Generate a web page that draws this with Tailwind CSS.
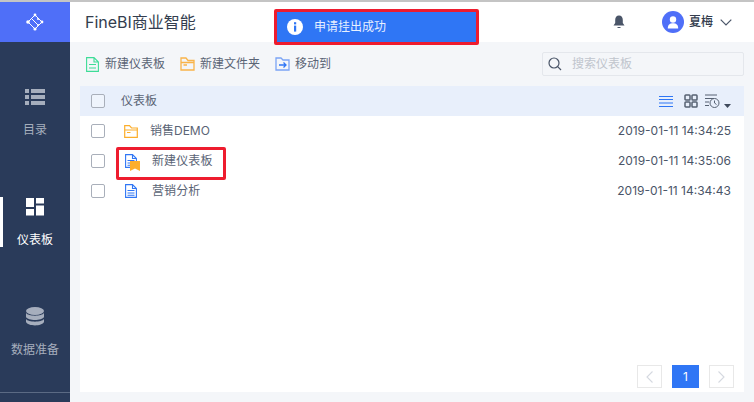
<!DOCTYPE html>
<html lang="zh-CN">
<head>
  <meta charset="UTF-8">
  <title>FineBI</title>
  <script src="https://cdn.jsdelivr.net/npm/@tailwindcss/browser@4"></script>
</head>
<body class="w-[754px] h-[402px] overflow-hidden bg-[#f4f6f9] font-['Inter','Noto_Sans_CJK_SC',sans-serif] text-[#4a5568]">
  <div class="relative flex flex-col w-[754px] h-[402px]">
    <div class="h-[2px] bg-[#c4c4c4]"></div>
    <div class="flex flex-1 min-h-0">

      <!-- Sidebar -->
      <aside class="w-[70px] bg-[#2a3b5a] flex flex-col relative">
        <div class="h-[40px] bg-[#4f6ff8] flex items-center justify-center">
          <svg width="18" height="18" viewBox="0 0 18 18" fill="none" stroke="#fff" stroke-width="1">
            <path d="M9 2 L16 9 L9 16 L2 9 Z M6 6 L12 12" />
            <circle cx="9" cy="2" r="1.4" fill="#fff" stroke="none"/>
            <circle cx="2" cy="9" r="1.8" fill="#fff" stroke="none"/>
            <circle cx="16" cy="9" r="1.4" fill="#fff" stroke="none"/>
            <circle cx="9" cy="16" r="1.6" fill="#fff" stroke="none"/>
            <circle cx="12" cy="6" r="1" fill="#fff" stroke="none"/>
            <circle cx="12" cy="12" r="1" fill="#fff" stroke="none"/>
          </svg>
        </div>
        <div class="flex flex-col gap-[60px] mt-[45px]">
          <a class="h-[50px] flex flex-col items-center text-[#a6aebd]">
            <svg class="mt-[2px] shrink-0" width="20" height="16" viewBox="0 0 20 16" fill="#a6aebd">
              <rect x="0" y="0" width="4" height="4"/><rect x="6" y="0" width="14" height="4"/>
              <rect x="0" y="6" width="4" height="4"/><rect x="6" y="6" width="14" height="4"/>
              <rect x="0" y="12" width="4" height="4"/><rect x="6" y="12" width="14" height="4"/>
            </svg>
            <span class="mt-[16px] text-[12px] leading-[18px] shrink-0">目录</span>
          </a>
          <a class="relative h-[50px] flex flex-col items-center text-white">
            <span class="absolute left-0 top-0 w-[3px] h-[50px] bg-white"></span>
            <svg class="mt-[1px] shrink-0" width="18" height="18" viewBox="0 0 18 18" fill="#fff">
              <rect x="0" y="0" width="8" height="9"/><rect x="10" y="0" width="8" height="5.5"/>
              <rect x="0" y="11" width="8" height="6.5"/><rect x="10" y="7.5" width="8" height="10"/>
            </svg>
            <span class="mt-[15px] text-[12px] leading-[18px] shrink-0">仪表板</span>
          </a>
          <a class="h-[50px] flex flex-col items-center text-[#a6aebd]">
            <svg class="shrink-0" width="18" height="20" viewBox="0 0 18 20" fill="#a6aebd">
              <ellipse cx="9" cy="4" rx="9" ry="4"/>
              <path d="M0 6 C2 9.5 16 9.5 18 6 V10 C16 14 2 14 0 10 Z"/>
              <path d="M0 12 C2 15.5 16 15.5 18 12 V15 C16 19.5 2 19.5 0 15 Z"/>
            </svg>
            <span class="mt-[14px] text-[12px] leading-[18px] shrink-0">数据准备</span>
          </a>
        </div>
        <div class="absolute left-0 right-0 bottom-[9px] h-px bg-[#5b6a84]"></div>
      </aside>

      <div class="flex-1 flex flex-col min-w-0">
        <!-- Header -->
        <header class="h-[40px] bg-white flex items-center pl-[15px] pr-[22px]">
          <h1 class="text-[16px] font-normal text-[#333d4e]">FineBI商业智能</h1>
          <svg class="ml-auto" width="12" height="14" viewBox="0 0 12 14" fill="#4a5568">
            <path d="M6 0.5 C8.5 0.5 9.8 2.5 9.8 5 V8 L11.5 10.5 H0.5 L2.2 8 V5 C2.2 2.5 3.5 0.5 6 0.5 Z"/>
            <rect x="4.5" y="12" width="3" height="1"/>
          </svg>
          <div class="ml-[37px] w-[22px] h-[22px] rounded-full bg-[#4f6ff8] flex items-center justify-center">
            <svg width="12" height="13" viewBox="0 0 12 13" fill="#fff">
              <circle cx="6" cy="3.5" r="3.2"/>
              <path d="M0.8 12.5 C0.8 8.5 3 7.2 6 7.2 C9 7.2 11.2 8.5 11.2 12.5 Z"/>
            </svg>
          </div>
          <span class="ml-[5px] text-[12px] font-medium text-[#333d4e]">夏梅</span>
          <svg class="ml-[7px]" width="12" height="7" viewBox="0 0 12 7" fill="none" stroke="#4a5568" stroke-width="1.2"><path d="M0.7 0.7 L6 6 L11.3 0.7"/></svg>
        </header>

        <!-- Toolbar -->
        <div class="h-[44px] flex items-center pl-[16px] pr-[10px] text-[12px] text-[#5a6475]">
          <svg width="13" height="15" viewBox="0 0 13 15" fill="none" stroke="#3ddc97" stroke-width="1.1">
            <path d="M0.6 0.6 H8 L12.4 5 V14.4 H0.6 Z M8 0.6 V5 H12.4 M3 7.5 H10 M3 11 H10"/>
          </svg>
          <span class="ml-[6px]">新建仪表板</span>
          <svg class="ml-[15px]" width="15" height="14" viewBox="0 0 15 14" fill="none" stroke="#f9b44a" stroke-width="1.3">
            <path d="M1 1 H6 L8 3.5 H14 V13 H1 Z M1 5.5 H14 M3.5 8 H7"/>
          </svg>
          <span class="ml-[5px]">新建文件夹</span>
          <svg class="ml-[15px]" width="15" height="14" viewBox="0 0 15 14" fill="none" stroke="#7ba4f5" stroke-width="1.3">
            <path d="M1 1 H6 L8 3 H14 V13 H1 Z"/>
            <path d="M4 8 H11 M8.5 5.5 L11 8 L8.5 10.5" stroke="#2f76f5"/>
          </svg>
          <span class="ml-[5px]">移动到</span>
          <div class="ml-auto w-[202px] h-[24px] border border-[#e4e7ec] rounded-[2px] flex items-center pl-[5px]">
            <svg width="14" height="14" viewBox="0 0 14 14" fill="none" stroke="#4a5568" stroke-width="1.2">
              <circle cx="6" cy="6" r="5"/><path d="M9.7 9.7 L13 13"/>
            </svg>
            <span class="ml-[10px] text-[12px] text-[#c0c5cd]">搜索仪表板</span>
          </div>
        </div>

        <!-- Panel -->
        <main class="relative ml-[10px] mr-[10px] h-[306px] bg-white flex flex-col">
          <div class="h-[30px] bg-[#e8effb] flex items-center pl-[11px] pr-[13px] text-[12px] text-[#5a6475]">
            <span class="w-[14px] h-[14px] border border-[#a9afba] rounded-[2px] bg-white/30"></span>
            <span class="ml-[16px]">仪表板</span>
            <svg class="ml-auto" width="14" height="13" viewBox="0 0 14 13" stroke="#2f76f5" stroke-width="1"><path d="M0 1.5 H14 M0 4.5 H14 M0 8 H14 M0 11.5 H14"/></svg>
            <svg class="ml-[11px]" width="14" height="14" viewBox="0 0 14 14" fill="none" stroke="#566172" stroke-width="1.5">
              <rect x="1" y="1" width="5" height="5" rx="0.8"/><rect x="8" y="1" width="5" height="5" rx="0.8"/>
              <rect x="1" y="8" width="5" height="5" rx="0.8"/><rect x="8" y="8" width="5" height="5" rx="0.8"/>
            </svg>
            <svg class="ml-[7px]" width="16" height="15" viewBox="0 0 16 15" fill="none" stroke="#566172" stroke-width="1">
              <path d="M0 1 H12 M0 4.5 H9 M0 8 H4 M0 11.5 H4"/>
              <circle cx="9.5" cy="9" r="4.5"/><path d="M9.5 6.5 V9 L11.5 10.5"/>
            </svg>
            <svg class="ml-[3px] mt-[9px]" width="7" height="4" viewBox="0 0 7 4" fill="#3f4a5c"><path d="M0 0 H7 L3.5 4 Z"/></svg>
          </div>

          <div class="h-[30px] flex items-center pl-[11px] pr-[11px] text-[12px]">
            <span class="w-[14px] h-[14px] border border-[#a9afba] rounded-[2px]"></span>
            <svg class="ml-[19px]" width="14" height="13" viewBox="0 0 14 13" fill="none" stroke="#fcae2c" stroke-width="1.2">
              <path d="M0.7 0.7 H5.5 L7.5 3 H13.3 V12.3 H0.7 Z M0.7 5 H13.3 M3 7.5 H6.5"/>
            </svg>
            <span class="ml-[12px] text-[#5a6475]">销售DEMO</span>
            <span class="ml-auto mr-[2px] text-[#4a5568]">2019-01-11 14:34:25</span>
          </div>

          <div class="h-[30px] flex items-center pl-[11px] pr-[11px] text-[12px]">
            <span class="w-[14px] h-[14px] border border-[#a9afba] rounded-[2px]"></span>
            <span class="relative ml-[20px] w-[12px] h-[14px]">
              <svg class="absolute left-0 top-0" width="12" height="14" viewBox="0 0 12 14" fill="none" stroke="#2f76f5" stroke-width="1.1">
                <path d="M0.6 0.6 H7.5 L11.4 4.5 V13.4 H0.6 Z M7.5 0.6 V4.5 H11.4 M2.5 6.5 H9.5 M2.5 9 H9.5 M2.5 11.3 H7"/>
              </svg>
              <svg class="absolute left-[5px] top-[7px]" width="10" height="10" viewBox="0 0 10 10" fill="#fcae2c"><path d="M0 0 H10 V10 L5 7.5 L0 10 Z"/></svg>
            </span>
            <span class="ml-[15px] text-[#5a6475] tracking-[0.1px]">新建仪表板</span>
            <span class="ml-auto mr-[2px] text-[#4a5568]">2019-01-11 14:35:06</span>
          </div>

          <div class="h-[30px] flex items-center pl-[11px] pr-[11px] text-[12px]">
            <span class="w-[14px] h-[14px] border border-[#a9afba] rounded-[2px]"></span>
            <svg class="ml-[20px]" width="12" height="14" viewBox="0 0 12 14" fill="none" stroke="#2f76f5" stroke-width="1.1">
              <path d="M0.6 0.6 H7.5 L11.4 4.5 V13.4 H0.6 Z M7.5 0.6 V4.5 H11.4 M2.5 6.5 H9.5 M2.5 9 H9.5 M2.5 11.3 H9.5"/>
            </svg>
            <span class="ml-[15px] text-[#5a6475] tracking-[0.1px]">营销分析</span>
            <span class="ml-auto mr-[2px] text-[#4a5568]">2019-01-11 14:34:43</span>
          </div>

          <!-- Pagination -->
          <div class="mt-auto mb-[4px] mr-[10px] flex justify-end items-center gap-[10px]">
            <span class="w-[25px] h-[23px] border border-[#e8e8e8] flex items-center justify-center">
              <svg width="7" height="12" viewBox="0 0 7 12" fill="none" stroke="#d5d9e0" stroke-width="1.1"><path d="M6.5 0.5 L1 6 L6.5 11.5"/></svg>
            </span>
            <span class="w-[27px] h-[23px] bg-[#2f76f5] text-white text-[12px] flex items-center justify-center">1</span>
            <span class="w-[25px] h-[23px] border border-[#e8e8e8] flex items-center justify-center">
              <svg width="7" height="12" viewBox="0 0 7 12" fill="none" stroke="#d5d9e0" stroke-width="1.1"><path d="M0.5 0.5 L6 6 L0.5 11.5"/></svg>
            </span>
          </div>
        </main>
      </div>
    </div>

    <!-- Toast, with the red annotation boxes over the page -->
    <div class="absolute left-[274px] top-[9px] w-[205px] h-[36px] bg-[#2f76f5] border-[3px] border-[#ee1c2e] rounded-[2px] flex items-center pl-[10px] text-white text-[12px]">
      <svg width="16" height="16" viewBox="0 0 16 16">
        <circle cx="8" cy="8" r="8" fill="#fff"/>
        <rect x="7" y="3.2" width="2.2" height="2.2" fill="#2f76f5"/>
        <rect x="7" y="6.6" width="2.2" height="6" fill="#2f76f5"/>
      </svg>
      <span class="ml-[11px] text-[#e8f0ff]">申请挂出成功</span>
    </div>
    <div class="absolute left-[116px] top-[147px] w-[110px] h-[33px] border-[3px] border-[#ee1c2e] rounded-[2px]"></div>
  </div>
</body>
</html>
